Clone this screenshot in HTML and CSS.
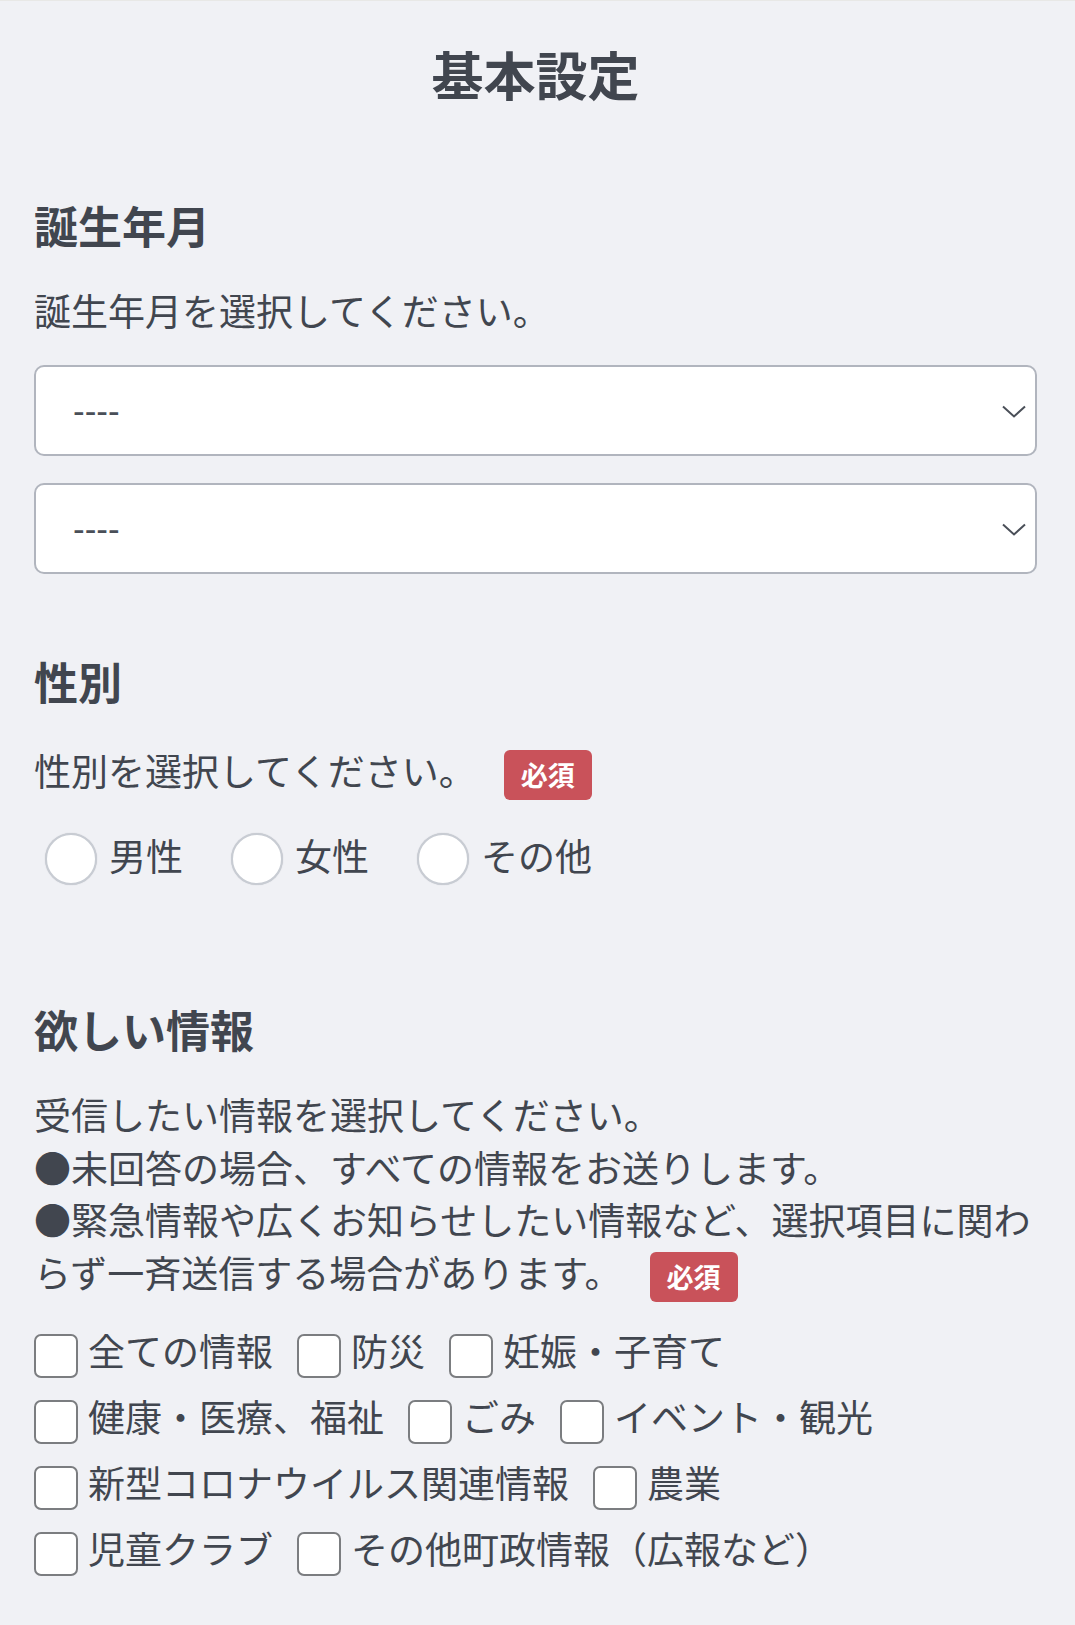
FILE: index.html
```html
<!DOCTYPE html>
<html lang="ja">
<head>
<meta charset="utf-8">
<title>基本設定</title>
<link rel="stylesheet" href="styles.css">
</head>
<body>
<main class="page">
  <h1 class="title">基本設定</h1>

  <section class="sec sec--birth">
    <h2 class="sec-head">誕生年月</h2>
    <p class="desc desc--birth">誕生年月を選択してください。</p>
    <div class="select-wrap">
      <select class="select"><option>----</option></select>
      <svg class="chev" viewBox="0 0 24 13" width="24" height="13"><path d="M1 1.5 L12 11.5 L23 1.5" fill="none" stroke="#4a4f58" stroke-width="2"/></svg>
    </div>
    <div class="select-wrap select-wrap--second">
      <select class="select"><option>----</option></select>
      <svg class="chev" viewBox="0 0 24 13" width="24" height="13"><path d="M1 1.5 L12 11.5 L23 1.5" fill="none" stroke="#4a4f58" stroke-width="2"/></svg>
    </div>
  </section>

  <section class="sec sec--gender">
    <h2 class="sec-head">性別</h2>
    <div class="desc-row">
      <p class="desc">性別を選択してください。</p>
      <span class="badge badge--row">必須</span>
    </div>
    <div class="radios">
      <label class="radio"><input type="radio" name="sex" class="radio-input"><span class="radio-label">男性</span></label>
      <label class="radio"><input type="radio" name="sex" class="radio-input"><span class="radio-label">女性</span></label>
      <label class="radio"><input type="radio" name="sex" class="radio-input"><span class="radio-label">その他</span></label>
    </div>
  </section>

  <section class="sec sec--info">
    <h2 class="sec-head">欲しい情報</h2>
    <p class="desc desc--info">受信したい情報を選択してください。<br>●未回答の場合、すべての情報をお送りします。<br>●緊急情報や広くお知らせしたい情報など、選択項目に関わ<br>らず一斉送信する場合があります。<span class="badge badge--inline">必須</span></p>
    <div class="checks">
      <div class="check-row">
        <label class="check"><input type="checkbox" class="check-input"><span class="check-label">全ての情報</span></label>
        <label class="check"><input type="checkbox" class="check-input"><span class="check-label">防災</span></label>
        <label class="check"><input type="checkbox" class="check-input"><span class="check-label">妊娠・子育て</span></label>
      </div>
      <div class="check-row">
        <label class="check"><input type="checkbox" class="check-input"><span class="check-label">健康・医療、福祉</span></label>
        <label class="check"><input type="checkbox" class="check-input"><span class="check-label">ごみ</span></label>
        <label class="check"><input type="checkbox" class="check-input"><span class="check-label">イベント・観光</span></label>
      </div>
      <div class="check-row">
        <label class="check"><input type="checkbox" class="check-input"><span class="check-label">新型コロナウイルス関連情報</span></label>
        <label class="check"><input type="checkbox" class="check-input"><span class="check-label">農業</span></label>
      </div>
      <div class="check-row">
        <label class="check"><input type="checkbox" class="check-input"><span class="check-label">児童クラブ</span></label>
        <label class="check"><input type="checkbox" class="check-input"><span class="check-label">その他町政情報（広報など）</span></label>
      </div>
    </div>
  </section>
</main>
</body>
</html>
```

FILE: styles.css
```css
html, body {
  margin: 0;
  padding: 0;
}
body {
  background: #f0f1f5;
  border-top: 1px solid #e8e8e6;
  min-height: 1624px;
  font-family: "Noto Sans CJK JP", "Noto Sans", sans-serif;
  color: #41464f;
}
.page {
  padding: 0 38px 0 34px;
}
.title {
  margin: 38px 0 0;
  font-size: 52px;
  line-height: 70px;
  font-weight: 700;
  text-align: center;
}
.sec-head {
  margin: 0;
  font-size: 44px;
  line-height: 60px;
  font-weight: 700;
}
.sec--birth { margin-top: 86px; }
.sec--gender { margin-top: 77px; }
.sec--info { margin-top: 114px; }

.desc {
  margin: 0;
  font-size: 37px;
  line-height: 53px;
}
.desc--birth { margin-top: 29px; }

.select-wrap {
  position: relative;
  margin-top: 28px;
}
.select-wrap--second { margin-top: 27px; }
.select {
  display: block;
  width: 100%;
  height: 91px;
  box-sizing: border-box;
  appearance: none;
  -webkit-appearance: none;
  background: #fff;
  border: 2px solid #b1b5be;
  border-radius: 10px;
  padding: 0 60px 0 37px;
  font-family: "Liberation Sans", sans-serif;
  font-size: 35px;
  color: #4a4f58;
  outline: none;
}
.chev {
  position: absolute;
  right: 11px;
  top: 40px;
  pointer-events: none;
}

.desc-row {
  display: flex;
  align-items: center;
  margin-top: 29px;
}
.badge {
  display: inline-block;
  width: 88px;
  height: 50px;
  box-sizing: border-box;
  background: #c9525a;
  color: #fff;
  border-radius: 6px;
  font-size: 27px;
  font-weight: 700;
  line-height: 50px;
  text-align: center;
}
.badge--row {
  margin-left: 28px;
  margin-top: 10px;
}
.badge--inline {
  margin-left: 28px;
  vertical-align: middle;
}

.radios {
  display: flex;
  align-items: center;
  gap: 48px;
  margin-top: 25px;
  padding-left: 11px;
  height: 60px;
}
.radio {
  display: flex;
  align-items: center;
  gap: 12px;
}
.radio-input {
  appearance: none;
  -webkit-appearance: none;
  margin: 8px 0 0;
  width: 52px;
  height: 52px;
  box-sizing: border-box;
  border: 2px solid #c8ccd3;
  border-radius: 50%;
  background: #fff;
  box-shadow: 0 0 1px rgba(120, 125, 135, 0.4);
}
.radio-label {
  font-size: 37px;
  line-height: 53px;
}

.desc--info {
  margin-top: 29px;
  line-height: 52.5px;
}
.checks {
  display: flex;
  flex-direction: column;
  gap: 10px;
  margin-top: 20px;
}
.check-row {
  display: flex;
  align-items: center;
  gap: 24px;
  height: 56px;
}
.check {
  display: flex;
  align-items: center;
  gap: 10px;
}
.check-input {
  appearance: none;
  -webkit-appearance: none;
  margin: 12px 0 0;
  width: 44px;
  height: 44px;
  box-sizing: border-box;
  border: 2px solid #7b7d80;
  border-radius: 7px;
  background: #fff;
}
.check-label {
  font-size: 37px;
  line-height: 53px;
  white-space: nowrap;
}
```
